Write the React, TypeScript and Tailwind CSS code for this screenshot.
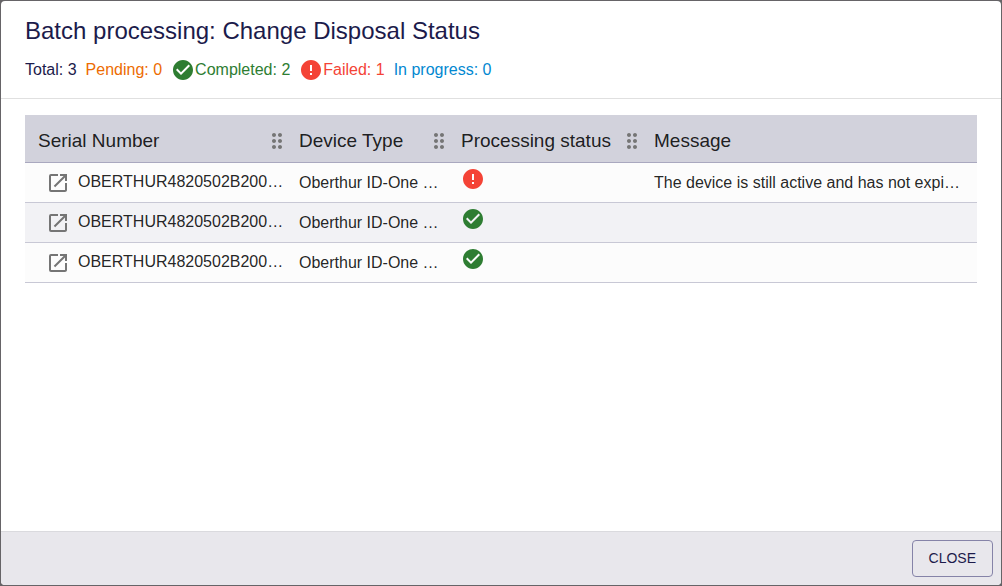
import { MdCheckCircle, MdDragIndicator, MdError, MdOpenInNew } from 'react-icons/md';

type Status = 'completed' | 'failed';

type Row = {
  id: number;
  serial: string;
  deviceType: string;
  status: Status;
  message: string;
};

const rows: Row[] = [
  {
    id: 1,
    serial: 'OBERTHUR4820502B200…',
    deviceType: 'Oberthur ID-One …',
    status: 'failed',
    message: 'The device is still active and has not expi…',
  },
  { id: 2, serial: 'OBERTHUR4820502B200…', deviceType: 'Oberthur ID-One …', status: 'completed', message: '' },
  { id: 3, serial: 'OBERTHUR4820502B200…', deviceType: 'Oberthur ID-One …', status: 'completed', message: '' },
];

const columns = ['Serial Number', 'Device Type', 'Processing status', 'Message'];

function StatusIcon({ status }: { status: Status }) {
  return status === 'failed' ? (
    <MdError size={24} className="shrink-0 text-[#f44336]" aria-label="Failed" />
  ) : (
    <MdCheckCircle size={24} className="shrink-0 text-[#2e7d32]" aria-label="Completed" />
  );
}

function Summary() {
  return (
    <div className="flex items-center gap-[9px] text-base leading-6">
      <span>Total: 3</span>
      <span className="text-[#ed6c02]">Pending: 0</span>
      <span className="flex items-center text-[#2e7d32]">
        <StatusIcon status="completed" />
        Completed: 2
      </span>
      <span className="flex items-center text-[#f44336]">
        <StatusIcon status="failed" />
        Failed: 1
      </span>
      <span className="text-[#0288d1]">In progress: 0</span>
    </div>
  );
}

function DeviceTable() {
  return (
    <table className="w-full table-fixed border-collapse text-left text-black/87">
      <colgroup>
        <col className="w-[261px]" />
        <col className="w-[162px]" />
        <col className="w-[193px]" />
        <col />
      </colgroup>
      <thead>
        <tr className="h-[47px] border-b border-[#a9a8bf] bg-[#d2d2dc]">
          {columns.map((name, i) => (
            <th key={name} className="p-0 pl-[13px] text-[19px] font-normal">
              <div className="flex items-center justify-between pt-1.5">
                <span className="whitespace-nowrap">{name}</span>
                {i < columns.length - 1 && <MdDragIndicator size={24} className="-mr-[3px] shrink-0 text-[#757575]" />}
              </div>
            </th>
          ))}
        </tr>
      </thead>
      <tbody>
        {rows.map((row) => (
          <tr key={row.id} className="h-10 border-b border-[#c8c8d5] odd:bg-[#fcfcfc] even:bg-[#f2f2f5]">
            <td className="p-0 pl-[21px]">
              <div className="flex items-center gap-2">
                <button type="button" aria-label="Open device" className="pt-0.5 text-[#757575]">
                  <MdOpenInNew size={24} />
                </button>
                <span className="min-w-0 truncate">{row.serial}</span>
              </div>
            </td>
            <td className="truncate p-0 pt-0.5 pr-2 pl-[13px]">{row.deviceType}</td>
            <td className="p-0 pb-1.5 pl-[13px]">
              <StatusIcon status={row.status} />
            </td>
            <td className="truncate p-0 pt-0.5 pr-2 pl-[13px]">{row.message}</td>
          </tr>
        ))}
      </tbody>
    </table>
  );
}

export default function App() {
  return (
    <div className="h-screen bg-[#666467] p-px font-['Liberation_Sans',Arial,sans-serif] text-[#1c1b4b]">
      <div role="dialog" aria-labelledby="title" className="flex h-full flex-col overflow-hidden rounded bg-white">
        <header className="border-b border-[#e0e0e0] px-6 pt-3 pb-4">
          <h1 id="title" className="mb-[9px] text-2xl leading-9">
            Batch processing: Change Disposal Status
          </h1>
          <Summary />
        </header>
        <main className="flex-1 overflow-auto px-6 pt-4">
          <DeviceTable />
        </main>
        <footer className="flex justify-end border-t border-[#dadade] bg-[#e8e7ec] p-2">
          <button type="button" className="h-[37px] rounded border border-[#8583a8] px-4 pb-0.5 text-sm">
            CLOSE
          </button>
        </footer>
      </div>
    </div>
  );
}
